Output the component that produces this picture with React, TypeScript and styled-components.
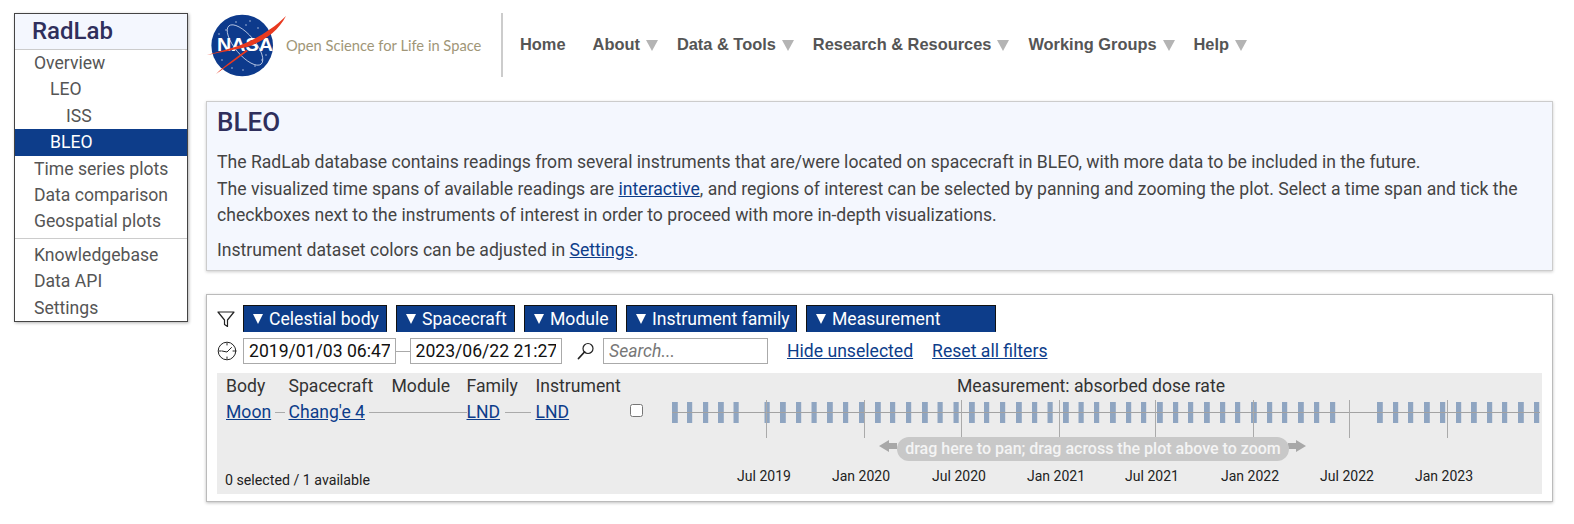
import React from "react";
import styled, { createGlobalStyle } from "styled-components";

const Global = createGlobalStyle`
  html, body { margin: 0; padding: 0; background: #fff; }
  body { font-family: Roboto, "Liberation Sans", sans-serif; font-size: 17.6px; color: #444; width: 1574px; height: 524px; overflow: hidden; }
  a { color: #0d3d8a; }
`;

const Page = styled.div`
  display: flex;
  align-items: flex-start;
  gap: 18px;
  padding: 13px 21px 0 14px;
`;

const Sidebar = styled.nav`
  width: 172px;
  flex: none;
  border: 1px solid #444;
  box-shadow: 1px 1px 3px rgba(0, 0, 0, 0.3);
  background: #fff;
`;

const Brand = styled.div`
  height: 35px;
  line-height: 35px;
  padding-left: 17px;
  background: #f4f7fe;
  border-bottom: 1px solid #ccc;
  font-size: 24px;
  font-weight: 500;
  color: #2f2f5c;
`;

const MenuItem = styled.div<{ $level?: number; $active?: boolean }>`
  height: 26.4px;
  line-height: 26px;
  padding-left: ${(p) => 19 + (p.$level ?? 0) * 16}px;
  background: ${(p) => (p.$active ? "#0d3d8a" : "transparent")};
  color: ${(p) => (p.$active ? "#fff" : "#555")};
`;

const MenuRule = styled.div`
  border-top: 1px solid #ccc;
  margin: 3px 0 3px;
`;

const Main = styled.main`
  flex: 1;
  min-width: 0;
  display: flex;
  flex-direction: column;
`;

const Header = styled.header`
  height: 64px;
  display: flex;
  align-items: center;
`;

const LogoBlock = styled.div`
  width: 295px;
  height: 64px;
  flex: none;
  display: flex;
  align-items: center;
  border-right: 2px solid #ccc;
`;

const Tagline = styled.span`
  font-family: Lato, sans-serif;
  font-size: 14.7px;
  line-height: 16px;
  font-weight: 400;
  color: #a09678;
  margin: -1px 0 0 0;
  white-space: nowrap;
`;

const TopNav = styled.div`
  display: flex;
  margin: -2px 0 0 17px;
  font-family: "Liberation Sans", Arial, sans-serif;
  font-weight: 700;
  font-size: 16.4px;
  color: #555;
  white-space: nowrap;
`;

const TopNavItem = styled.span<{ $caret?: boolean }>`
  display: flex;
  align-items: center;
  gap: 6px;
  margin-right: ${(p) => (p.$caret ? 19 : 27)}px;
`;

const Caret = styled.span`
  width: 0;
  height: 0;
  border-left: 6px solid transparent;
  border-right: 6px solid transparent;
  border-top: 11px solid #b4b4b4;
  margin-top: 3px;
`;

const InfoBox = styled.section`
  margin-top: 24px;
  height: 170px;
  box-sizing: border-box;
  border: 1px solid #ccc;
  box-shadow: 0 1px 3px rgba(0, 0, 0, 0.2);
  background: #f4f7fe;
  padding: 0 10px;
`;

const Title = styled.h1`
  margin: 0;
  padding-top: 5px;
  height: 42px;
  line-height: 30px;
  font-size: 26px;
  font-weight: 500;
  color: #2f2f5c;
`;

const Para = styled.p`
  margin: 0 0 8px;
  line-height: 26.6px;
  color: #444;
  white-space: nowrap;
`;

const Panel = styled.section`
  margin-top: 23px;
  height: 208px;
  box-sizing: border-box;
  border: 1px solid #bbb;
  box-shadow: 0 1px 3px rgba(0, 0, 0, 0.25);
  padding: 10px 10px 6px;
  display: flex;
  flex-direction: column;
`;

const FilterRow = styled.div`
  display: flex;
  align-items: center;
  height: 27px;
`;

const IconSlot = styled.span`
  width: 26px;
  flex: none;
  display: flex;
  align-items: center;
`;

const FilterButton = styled.span<{ $width: number }>`
  box-sizing: border-box;
  width: ${(p) => p.$width}px;
  height: 27px;
  margin-right: 9px;
  padding-left: 9px;
  display: flex;
  align-items: center;
  background: #0d3d8a;
  border: 1px solid #111;
  border-bottom-color: #0d3d8a;
  color: #fff;
  white-space: nowrap;
`;

const FilterCaret = styled.span`
  width: 0;
  height: 0;
  border-left: 5px solid transparent;
  border-right: 5px solid transparent;
  border-top: 10px solid #fff;
  margin: 1px 6px 0 0;
`;

const DateRow = styled.div`
  display: flex;
  align-items: center;
  height: 26px;
  margin-top: 6px;
`;

const DateInput = styled.input`
  box-sizing: border-box;
  width: 152.5px;
  height: 26px;
  padding: 0 5px;
  border: 1px solid #aaa;
  border-radius: 0;
  font: 17.6px Roboto, sans-serif;
  color: #111;
  background: #fff;
`;

const Dash = styled.span`
  width: 14px;
  height: 1px;
  background: #aaa;
`;

const MagnifierSlot = styled.span`
  width: 41px;
  flex: none;
  display: flex;
  justify-content: flex-end;
  padding-right: 8px;
  box-sizing: border-box;
`;

const SearchInput = styled.input`
  box-sizing: border-box;
  width: 165px;
  height: 26px;
  padding: 0 5px;
  border: 1px solid #aaa;
  font: italic 17.6px Roboto, sans-serif;
  &::placeholder { color: #777; opacity: 1; }
`;

const ActionLink = styled.a`
  margin-left: 19px;
  white-space: nowrap;
`;

const DataArea = styled.div`
  position: relative;
  margin-top: 9px;
  height: 121px;
  background: #ececec;
  display: flex;
`;

const TreeColumn = styled.div`
  width: 416px;
  flex: none;
  display: flex;
  flex-direction: column;
  padding-left: 9px;
  box-sizing: border-box;
`;

const TreeGrid = styled.div`
  display: grid;
  grid-template-columns: 62.5px 103px 75px 69px auto;
  line-height: 26px;
  color: #333;
`;

const Count = styled.div`
  margin-top: auto;
  margin-bottom: 6px;
  margin-left: -1px;
  font-size: 14.2px;
  line-height: 16px;
  color: #222;
`;

const LinkCell = styled.span`
  display: flex;
  align-items: center;
  white-space: nowrap;
`;

const Connector = styled.span<{ $left?: number; $right?: number }>`
  flex: 1;
  height: 1px;
  margin: 0 ${(p) => p.$right ?? 0}px 0 ${(p) => p.$left ?? 0}px;
  background: #aaa;
`;

const Check = styled.input`
  position: absolute;
  left: 413px;
  top: 31px;
  width: 13px;
  height: 13px;
  margin: 0;
`;

const Chart = styled.div`
  flex: 1;
  position: relative;
`;

const ChartTitle = styled.div`
  position: absolute;
  left: 0;
  right: 0;
  top: 0;
  padding-left: 7px;
  text-align: center;
  line-height: 26px;
  color: #333;
`;

const Plot = styled.svg`
  display: block;
  font-family: Roboto, sans-serif;
`;

const PanHint = styled.div`
  position: absolute;
  left: 264px;
  top: 64px;
  width: 392px;
  height: 24px;
  line-height: 24px;
  border-radius: 12px;
  background: #c8c8c8;
  color: #f4f4f4;
  font-size: 16px;
  font-weight: 500;
  text-align: center;
  white-space: nowrap;
`;

// x coordinates of measured bars, page pixels
const barsPage = [
  672, 687, 703, 718, 733.5, 764.5, 780, 796, 811.5, 827, 843, 859, 875, 890, 906, 922, 937.5, 953.5, 969, 984, 1000, 1016, 1032,
  1047.5, 1063, 1078.5, 1094, 1110, 1126, 1141, 1157, 1173, 1188, 1204, 1220, 1235, 1251, 1267, 1282, 1298, 1314, 1330,
  1377, 1393, 1408, 1424, 1440, 1456, 1471, 1487, 1502, 1518, 1534,
];
const ticks = [766, 864, 961, 1059, 1155, 1253, 1349, 1447];
const labels: [number, string][] = [
  [764, "Jul 2019"], [861, "Jan 2020"], [959, "Jul 2020"], [1056, "Jan 2021"],
  [1152, "Jul 2021"], [1250, "Jan 2022"], [1347, "Jul 2022"], [1444, "Jan 2023"],
];

const ORIGIN_X = 633; // page x of the chart's left edge
const ORIGIN_Y = 373; // page y of the data area's top

function NasaLogo() {
  const stars = [
    [226, 30], [236, 22], [250, 21], [258, 28], [222, 60], [232, 68], [262, 60], [255, 66], [246, 25], [266, 55], [219, 34], [243, 70],
  ];
  return (
    <svg width="80" height="64" viewBox="206 13 80 64" aria-hidden="true">
      <circle cx="242.2" cy="45.5" r="30.8" fill="#0d3a8c" />
      {stars.map(([x, y], i) => (
        <circle key={i} cx={x} cy={y} r="0.7" fill="#cfd9ef" />
      ))}
      <ellipse cx="245" cy="45" rx="10" ry="25" transform="rotate(-40 245 45)" fill="none" stroke="#cfd9ef" strokeWidth="0.8" />
      <text x="217" y="51" textLength="56" lengthAdjust="spacingAndGlyphs" fontFamily="'Liberation Sans', sans-serif" fontWeight="700" fontSize="18" fill="#fff">NASA</text>
      <path d="M207 55 L235 47 C250 42 270 32 286 16 C278 32 262 42 247 47 C238 49 222 52 207 55 Z" fill="#e8391f" />
      <path d="M216 74 C224 66 236 58 246 50 L248 51 C236 60 224 68 216 74 Z" fill="#e8391f" />
    </svg>
  );
}

function FilterIcon() {
  return (
    <svg width="18" height="18" viewBox="0 0 18 18" fill="none" stroke="#222" strokeWidth="1.2" strokeLinejoin="round">
      <path d="M1 2 H17 L10.5 10 V16.5 L7.5 14.5 V10 Z" />
    </svg>
  );
}

function ClockIcon() {
  return (
    <svg width="20" height="20" viewBox="0 0 20 20" fill="none" stroke="#222" strokeWidth="1" strokeLinecap="round">
      <circle cx="10" cy="10" r="8.8" />
      <path d="M10 2.5 V4 M10 16 V17.5 M2.5 10 H4 M16 10 H17.5 M5 10 L10 11 L14.5 6.5" />
    </svg>
  );
}

function MagnifierIcon() {
  return (
    <svg width="18" height="18" viewBox="0 0 18 18" fill="none" stroke="#222" strokeWidth="1.2" strokeLinecap="round">
      <circle cx="11" cy="6.5" r="5" />
      <path d="M7.5 10 L1.5 16.5" strokeWidth="1.8" />
    </svg>
  );
}

function Arrow({ x, dir }: { x: number; dir: 1 | -1 }) {
  const head = x + dir * 8;
  return (
    <path
      d={`M${x + dir * 18} 73 L${head} 67 V70 H${x} V76 H${head} V79 Z`}
      fill="#a8a8a8"
    />
  );
}

const filters: [string, number][] = [
  ["Celestial body", 144],
  ["Spacecraft", 119],
  ["Module", 93],
  ["Instrument family", 171],
  ["Measurement", 190],
];

export default function App() {
  return (
    <Page>
      <Global />
      <Sidebar>
        <Brand>RadLab</Brand>
        <MenuItem>Overview</MenuItem>
        <MenuItem $level={1}>LEO</MenuItem>
        <MenuItem $level={2}>ISS</MenuItem>
        <MenuItem $level={1} $active>BLEO</MenuItem>
        <MenuItem>Time series plots</MenuItem>
        <MenuItem>Data comparison</MenuItem>
        <MenuItem>Geospatial plots</MenuItem>
        <MenuRule />
        <MenuItem>Knowledgebase</MenuItem>
        <MenuItem>Data API</MenuItem>
        <MenuItem>Settings</MenuItem>
      </Sidebar>
      <Main>
        <Header>
          <LogoBlock>
            <NasaLogo />
            <Tagline>Open Science for Life in Space</Tagline>
          </LogoBlock>
          <TopNav>
            <TopNavItem>Home</TopNavItem>
            <TopNavItem $caret>About <Caret /></TopNavItem>
            <TopNavItem $caret>Data &amp; Tools <Caret /></TopNavItem>
            <TopNavItem $caret>Research &amp; Resources <Caret /></TopNavItem>
            <TopNavItem $caret>Working Groups <Caret /></TopNavItem>
            <TopNavItem $caret>Help <Caret /></TopNavItem>
          </TopNav>
        </Header>
        <InfoBox>
          <Title>BLEO</Title>
          <Para>
            The RadLab database contains readings from several instruments that are/were located on spacecraft in BLEO, with more data to be included in the future.
            <br />
            The visualized time spans of available readings are <a href="#">interactive</a>, and regions of interest can be selected by panning and zooming the plot. Select a time span and tick the
            <br />
            checkboxes next to the instruments of interest in order to proceed with more in-depth visualizations.
          </Para>
          <Para>
            Instrument dataset colors can be adjusted in <a href="#">Settings</a>.
          </Para>
        </InfoBox>
        <Panel>
          <FilterRow>
            <IconSlot><FilterIcon /></IconSlot>
            {filters.map(([label, width]) => (
              <FilterButton key={label} $width={width}><FilterCaret />{label}</FilterButton>
            ))}
          </FilterRow>
          <DateRow>
            <IconSlot><ClockIcon /></IconSlot>
            <DateInput readOnly value="2019/01/03 06:47" />
            <Dash />
            <DateInput readOnly value="2023/06/22 21:27" />
            <MagnifierSlot><MagnifierIcon /></MagnifierSlot>
            <SearchInput placeholder="Search..." />
            <ActionLink href="#">Hide unselected</ActionLink>
            <ActionLink href="#">Reset all filters</ActionLink>
          </DateRow>
          <DataArea>
            <TreeColumn>
              <TreeGrid>
                <span>Body</span>
                <span>Spacecraft</span>
                <span>Module</span>
                <span>Family</span>
                <span>Instrument</span>
                <LinkCell><a href="#">Moon</a><Connector $left={4} $right={4} /></LinkCell>
                <LinkCell><a href="#">Chang'e 4</a><Connector $left={4} /></LinkCell>
                <LinkCell><Connector $right={0} /></LinkCell>
                <LinkCell><a href="#">LND</a><Connector $left={5} $right={5} /></LinkCell>
                <LinkCell><a href="#">LND</a></LinkCell>
              </TreeGrid>
              <Count>0 selected / 1 available</Count>
            </TreeColumn>
            <Check type="checkbox" />
            <Chart>
              <ChartTitle>Measurement: absorbed dose rate</ChartTitle>
              <Plot width="909" height="121" viewBox="0 0 909 121">
                {barsPage.map((x, i) => (
                  <rect key={i} x={x - ORIGIN_X} y={402 - ORIGIN_Y} width={i % 3 === 0 ? 5.8 : 5.2} height="21" fill="#8fa5c1" />
                ))}
                <line x1={672 - ORIGIN_X} x2={1540 - ORIGIN_X} y1="39.5" y2="39.5" stroke="#a2a2a2" />
                {ticks.map((x) => (
                  <line key={x} x1={x - ORIGIN_X + 0.5} x2={x - ORIGIN_X + 0.5} y1="27" y2="65" stroke="#aaa" />
                ))}
                <Arrow x={897 - ORIGIN_X} dir={-1} />
                <Arrow x={1288 - ORIGIN_X} dir={1} />
                {labels.map(([x, t]) => (
                  <text key={t} x={x - ORIGIN_X} y="108" textAnchor="middle" fontSize="14" fill="#222">{t}</text>
                ))}
              </Plot>
              <PanHint>drag here to pan; drag across the plot above to zoom</PanHint>
            </Chart>
          </DataArea>
        </Panel>
      </Main>
    </Page>
  );
}
